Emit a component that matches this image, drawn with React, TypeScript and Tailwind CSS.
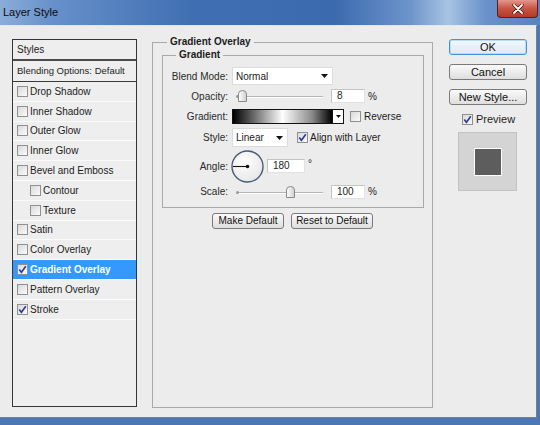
import React from "react";

type Item = { label: string; indent?: boolean; checked?: boolean; active?: boolean };

const styleItems: Item[] = [
  { label: "Drop Shadow" },
  { label: "Inner Shadow" },
  { label: "Outer Glow" },
  { label: "Inner Glow" },
  { label: "Bevel and Emboss" },
  { label: "Contour", indent: true },
  { label: "Texture", indent: true },
  { label: "Satin" },
  { label: "Color Overlay" },
  { label: "Gradient Overlay", checked: true, active: true },
  { label: "Pattern Overlay" },
  { label: "Stroke", checked: true },
];

function Check({ checked }: { checked?: boolean }) {
  return (
    <span className="flex h-[11px] w-[11px] shrink-0 items-center justify-center border border-[#8f9091] bg-[linear-gradient(135deg,#d9d9d9,#fbfbfb)]">
      {checked && (
        <svg width="9" height="9" viewBox="0 0 9 9">
          <path d="M1.3 4.6 L3.4 7.3 L7.8 1.2" fill="none" stroke="#2b3c9a" strokeWidth="1.6" />
        </svg>
      )}
    </span>
  );
}

function Field({ value, w }: { value: string; w: string }) {
  return (
    <div className={`${w} flex h-[14px] items-center border border-[#e2e2e2] border-t-[#c4c4c4] border-l-[#c4c4c4] bg-white pl-[5px] text-[10px] leading-none text-[#222]`}>
      {value}
    </div>
  );
}

function Select({ value, w, h }: { value: string; w: string; h: string }) {
  return (
    <div className={`${w} ${h} flex items-center justify-between border border-[#dcdcdc] bg-white pl-[3px] pr-[4px] text-[10px] text-[#222]`}>
      <span>{value}</span>
      <svg width="7" height="4" viewBox="0 0 7 4">
        <path d="M0 0 H7 L3.5 4 Z" fill="#111" />
      </svg>
    </div>
  );
}

function Slider({ at }: { at: number }) {
  return (
    <div className="relative ml-[4px] h-[12px] w-[87px]">
      <div className="absolute left-0 right-0 top-[6px] h-[2px] border-t border-[#b5b5b5] bg-white" />
      <div className="absolute left-0 top-[5px] h-[3px] w-[3px] rounded-full bg-[#9a9a9a]" />
      <svg className="absolute top-0" style={{ left: at }} width="9" height="12" viewBox="0 0 9 12">
        <defs>
          <linearGradient id="th" x1="0" x2="1" y1="0" y2="0">
            <stop offset="0" stopColor="#ffffff" />
            <stop offset="1" stopColor="#cfcfcf" />
          </linearGradient>
        </defs>
        <path d="M0.5 4 Q0.5 0.5 4.5 0.5 Q8.5 0.5 8.5 4 V11.5 H0.5 Z" fill="url(#th)" stroke="#8a8a8a" />
      </svg>
    </div>
  );
}

function Btn({ label, w, small, focus }: { label: string; w: string; small?: boolean; focus?: boolean }) {
  return (
    <div
      className={`${w} flex h-[16px] items-center justify-center rounded-[3px] border leading-none text-[#111] ${small ? "text-[10px]" : "text-[11px]"} ${
        focus
          ? "border-[#3d95dc] bg-[linear-gradient(#f4f9fd,#dde9f4)] shadow-[inset_0_0_0_1px_#b5ddf7]"
          : "border-[#7a7a7a] bg-[linear-gradient(#fafafa,#dedede)]"
      }`}
    >
      {label}
    </div>
  );
}

function Row({ label, h, children }: { label: string; h: string; children: React.ReactNode }) {
  return (
    <div className={`flex ${h} items-center`}>
      <span className="w-[65px] shrink-0 text-right text-[10px] text-[#2a2a2a]">{label}</span>
      <div className="ml-[4px] flex items-center">{children}</div>
    </div>
  );
}

export default function App() {
  return (
    <div className="flex h-[425px] w-[540px] flex-col overflow-hidden bg-[#4b78b4] font-['Liberation_Sans',Arial,sans-serif]">
      {/* title bar */}
      <div className="flex h-[25px] shrink-0 items-start justify-between bg-[linear-gradient(90deg,#8cadda_0%,#6690c9_10%,#416fb3_35%,#3b6aaf_62%,#6d95cb_76%,#a8c3e4_83%,#6992ca_90%,#5783c2_100%)]">
        <span className="pl-[3px] pt-[7px] text-[11px] leading-none text-[#0b0b0b]">Layer Style</span>
        <div className="mr-[2px] flex h-[18px] w-[41px] items-center justify-center rounded-b-[4px] border border-t-0 border-[#5b2019] bg-[linear-gradient(#e4968c,#c95443_50%,#b23a28)]">
          <svg width="12" height="10" viewBox="0 0 12 10">
            <path d="M2 1 L10 9 M10 1 L2 9" stroke="#3b120c" strokeWidth="3.2" strokeLinecap="round" />
            <path d="M2 1 L10 9 M10 1 L2 9" stroke="#fff" strokeWidth="1.8" strokeLinecap="round" />
          </svg>
        </div>
      </div>

      {/* body */}
      <div className="mb-[7px] mr-[3px] flex flex-1 items-start border-b border-r border-t border-[#6f7f96] border-t-[#dfe7f1] bg-[#ececec] pl-[12px] text-[#1c1c1c]">
        {/* styles list */}
        <div className="mt-[13px] flex h-[368px] w-[125px] flex-col border border-[#363636] bg-[#eeeeee]">
          <div className="flex h-[21px] items-center border-b-2 border-[#4a4a4a] pl-[4px] text-[10px]">Styles</div>
          <div className="flex h-[21px] items-center border-b border-[#3a3a3a] pl-[4px] text-[9.5px]">Blending Options: Default</div>
          {styleItems.map((it) => (
            <div
              key={it.label}
              className={`flex h-[19.8px] items-center gap-[2px] border-b border-[#fafafa] text-[10px] ${it.indent ? "pl-[17px]" : "pl-[4px]"} ${
                it.active ? "bg-[#3399ff] font-bold text-white" : ""
              }`}
            >
              <Check checked={it.checked} />
              <span>{it.label}</span>
            </div>
          ))}
        </div>

        {/* main settings */}
        <div className="ml-[15px] mt-[10px] flex flex-col">
          <fieldset className="h-[372px] w-[281px] border border-[#a9a9a9]">
            <legend className="ml-[14px] px-[3px] text-[10px] font-bold leading-[12px]">Gradient Overlay</legend>
            <fieldset className="ml-[9px] mt-[1px] w-[262px] border border-[#a9a9a9] pb-[7px] pt-[5px]">
              <legend className="ml-[13px] px-[3px] text-[10px] font-bold leading-[12px]">Gradient</legend>
              <Row label="Blend Mode:" h="h-[20px]">
                <Select value="Normal" w="w-[101px]" h="h-[18px]" />
              </Row>
              <Row label="Opacity:" h="h-[20px]">
                <Slider at={2} />
                <div className="ml-[8px]">
                  <Field value="8" w="w-[34px]" />
                </div>
                <span className="ml-[3px] text-[10px]">%</span>
              </Row>
              <Row label="Gradient:" h="h-[20px]">
                <div className="flex h-[15px] w-[112px] border border-[#111]">
                  <div className="flex-1 bg-[linear-gradient(90deg,#000_0%,#4a4a4a_15%,#ffffff_50%,#8a8a8a_80%,#000_100%)]" />
                  <div className="flex w-[11px] items-center justify-center border-l border-[#111] bg-white">
                    <svg width="5" height="3" viewBox="0 0 5 3">
                      <path d="M0 0 H5 L2.5 3 Z" fill="#111" />
                    </svg>
                  </div>
                </div>
                <div className="ml-[6px] flex items-center gap-[3px] text-[10px]">
                  <Check />
                  <span>Reverse</span>
                </div>
              </Row>
              <Row label="Style:" h="h-[23px]">
                <Select value="Linear" w="w-[56px]" h="h-[19px]" />
                <div className="ml-[9px] flex items-center gap-[2px] text-[10px]">
                  <Check checked />
                  <span>Align with Layer</span>
                </div>
              </Row>
              <Row label="Angle:" h="h-[34px]">
                <svg className="-ml-[1px]" width="33" height="33" viewBox="0 0 33 33">
                  <defs>
                    <radialGradient id="dial" cx="0.4" cy="0.35" r="0.7">
                      <stop offset="0" stopColor="#ffffff" />
                      <stop offset="1" stopColor="#e6e6e6" />
                    </radialGradient>
                  </defs>
                  <circle cx="16.5" cy="16.5" r="15.5" fill="url(#dial)" stroke="#4c5a78" strokeWidth="1.4" />
                  <line x1="2" y1="16.5" x2="16.5" y2="16.5" stroke="#111" strokeWidth="1.1" />
                  <circle cx="16.5" cy="16.5" r="1.8" fill="#111" />
                </svg>
                <div className="ml-[3px]">
                  <Field value="180" w="w-[38px]" />
                </div>
                <span className="mb-[6px] ml-[3px] text-[10px]">°</span>
              </Row>
              <Row label="Scale:" h="h-[17px]">
                <Slider at={50} />
                <div className="ml-[8px]">
                  <Field value="100" w="w-[34px]" />
                </div>
                <span className="ml-[3px] text-[10px]">%</span>
              </Row>
            </fieldset>
            <div className="mt-[5px] flex justify-center gap-[7px]">
              <Btn label="Make Default" w="w-[72px]" small />
              <Btn label="Reset to Default" w="w-[82px]" small />
            </div>
          </fieldset>
        </div>

        {/* right column */}
        <div className="ml-[16px] mt-[13px] flex w-[78px] flex-col">
          <Btn label="OK" w="w-[78px]" focus />
          <div className="mt-[9px]">
            <Btn label="Cancel" w="w-[78px]" />
          </div>
          <div className="mt-[9px]">
            <Btn label="New Style..." w="w-[78px]" />
          </div>
          <div className="ml-[13px] mt-[8px] flex h-[12px] items-center gap-[3px] text-[11px]">
            <Check checked />
            <span>Preview</span>
          </div>
          <div className="ml-[9px] mt-[7px] flex h-[59px] w-[59px] items-center justify-center border border-[#c2c2c2] bg-[#d4d4d4]">
            <div className="h-[28px] w-[28px] border border-white bg-[#5d5d5d]" />
          </div>
        </div>
      </div>
    </div>
  );
}
